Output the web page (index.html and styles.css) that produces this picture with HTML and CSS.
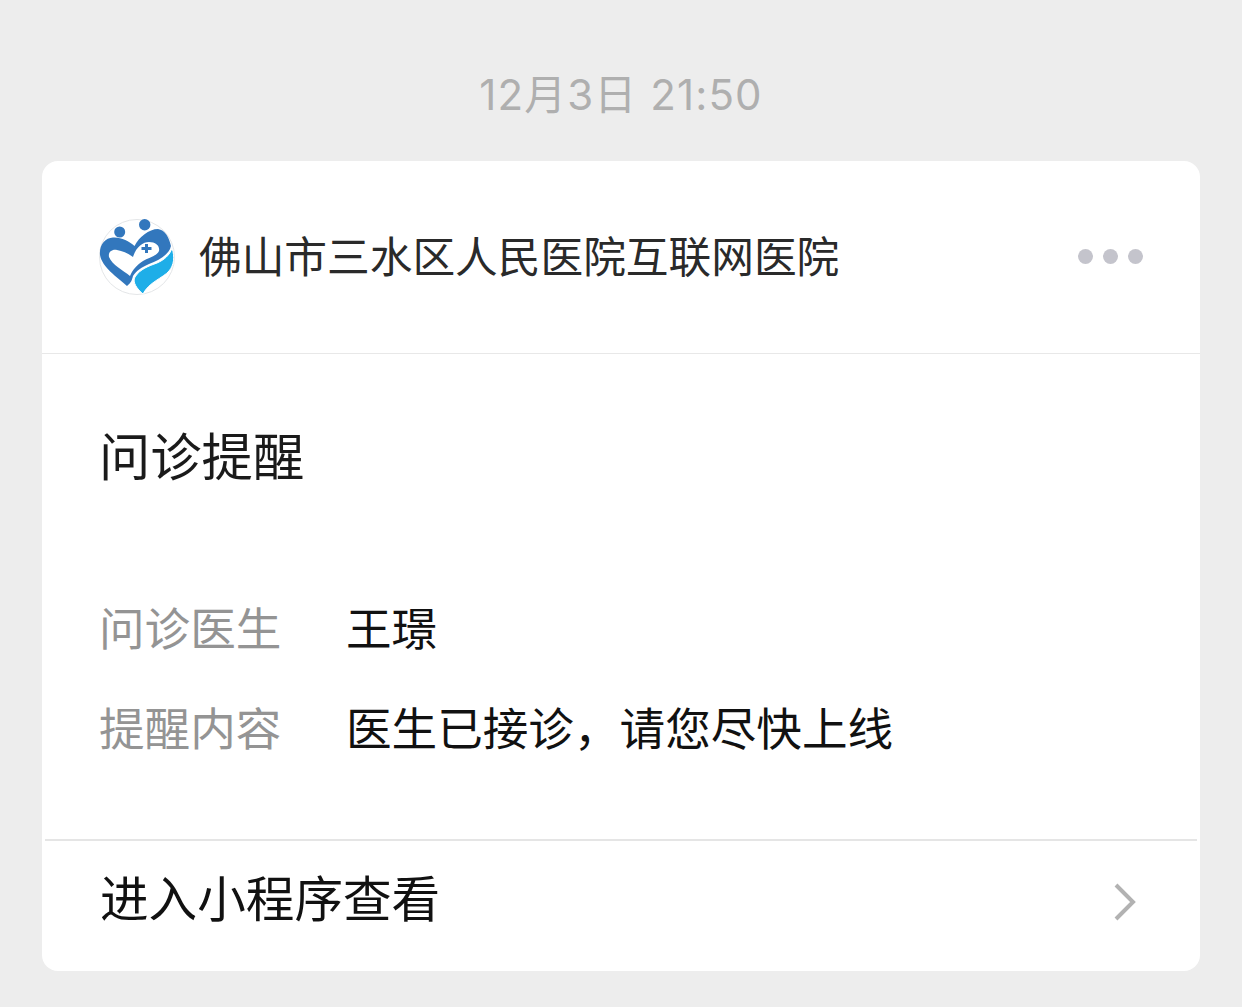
FILE: index.html
```html
<!DOCTYPE html>
<html lang="zh-CN">
<head>
    <meta charset="UTF-8">
    <title>问诊提醒</title>
    <link rel="stylesheet" href="styles.css">
</head>
<body>
    <div class="time">12月3日 21:50</div>
    <div class="card">
        <div class="header">
            <svg class="logo" viewBox="0 0 76 76" width="76" height="76">
                <circle cx="38" cy="38" r="37.5" fill="#fff" stroke="#e4e6e8" stroke-width="1"/>
                <circle cx="20.7" cy="13" r="5.5" fill="#3277bd"/>
                <circle cx="45.7" cy="5.8" r="5.7" fill="#3277bd"/>
                <path d="M28 67C18 58 3 48 1 36 0 26 6 19 14 18.500 22 18 30 22 35.500 27 40 18 50 10 59 10 66 11 70 18 72 27 70 36 60 41 50 45 43 48 37 52 34 57 33 61 32 64 28 67Z" fill="#3277bd"/>
                <path d="M31 57C24 51 13 46 10 38 9 33 13 30 18 31 24 32 30 35 34 38 37 28 44 23 50 23 57 23 61 27 60 32 58 37 49 39 44 42 38 46 34 50 31 57Z" fill="#fff"/>
                <path d="M73 29C76 38 75 46 70 52 64 59 50 63 44 75 38 70 33 63 36 58 41 50 50 47 58 44 65 41 71 36 73 29Z" fill="#1eaee8" stroke="#fff" stroke-width="1"/>
                <path d="M46 25h3v3h3.500v3h-3.500v3h-3v-3h-3.500v-3h3.500Z" fill="#3277bd"/>
            </svg>
            <div class="org">佛山市三水区人民医院互联网医院</div>
            <div class="dots"><span></span><span></span><span></span></div>
        </div>
        <div class="body">
            <div class="title">问诊提醒</div>
            <div class="row">
                <div class="label">问诊医生</div>
                <div class="value">王璟</div>
            </div>
            <div class="row">
                <div class="label">提醒内容</div>
                <div class="value">医生已接诊，请您尽快上线</div>
            </div>
        </div>
        <div class="footer">
            <div class="link">进入小程序查看</div>
            <svg class="chevron" viewBox="0 0 24 38" width="24" height="38">
                <path d="M3 2L20 19 3 36" fill="none" stroke="#b2b2b2" stroke-width="4"/>
            </svg>
        </div>
    </div>
</body>
</html>
```

FILE: styles.css
```css
html, body {
    margin: 0;
    padding: 0;
    background-color: #ededed;
    font-family: "Noto Sans CJK SC", "Noto Sans", sans-serif;
}

body {
    height: 1007px;
    overflow: hidden;
}

.time {
    height: 161px;
    padding-top: 68px;
    box-sizing: border-box;
    text-align: center;
    font-family: "Inter", "Noto Sans CJK SC", sans-serif;
    font-size: 42px;
    letter-spacing: 1.1px;
    line-height: 54px;
    color: #afafaf;
}

.card {
    width: 1158px;
    height: 810px;
    margin-left: 42px;
    background-color: #fff;
    border-radius: 16px;
    display: flex;
    flex-direction: column;
}

.header {
    height: 193px;
    flex: none;
    box-sizing: border-box;
    border-bottom: 1px solid #e8e8e8;
    padding: 0 57px 0 57px;
    display: flex;
    align-items: center;
}

.logo {
    flex: none;
    margin-right: 24px;
}

.org {
    flex: 1;
    font-size: 42.7px;
    line-height: 60px;
    color: #2a2a2a;
    margin-top: -7px;
}

.dots {
    display: flex;
    gap: 10px;
    margin-top: -1px;
}

.dots span {
    width: 15px;
    height: 15px;
    border-radius: 50%;
    background-color: #c4c4cc;
}

.body {
    flex: 1;
    padding: 0 57px;
}

.title {
    margin-top: 67px;
    font-size: 51.3px;
    line-height: 66px;
    color: #1a1a1a;
    margin-bottom: 109px;
}

.row {
    display: flex;
    height: 100px;
    font-size: 45.6px;
    line-height: 60px;
}

.label {
    width: 247px;
    color: #949494;
}

.value {
    color: #111;
}

.footer {
    height: 132px;
    flex: none;
    box-sizing: border-box;
    margin: 0 3px;
    padding: 0 60px 10px 55px;
    border-top: 2px solid #e5e5e5;
    display: flex;
    align-items: center;
    justify-content: space-between;
}

.link {
    font-size: 48.6px;
    line-height: 64px;
    color: #111;
    margin-bottom: 10px;
}

.chevron {
    flex: none;
    margin-top: 2px;
}
```
